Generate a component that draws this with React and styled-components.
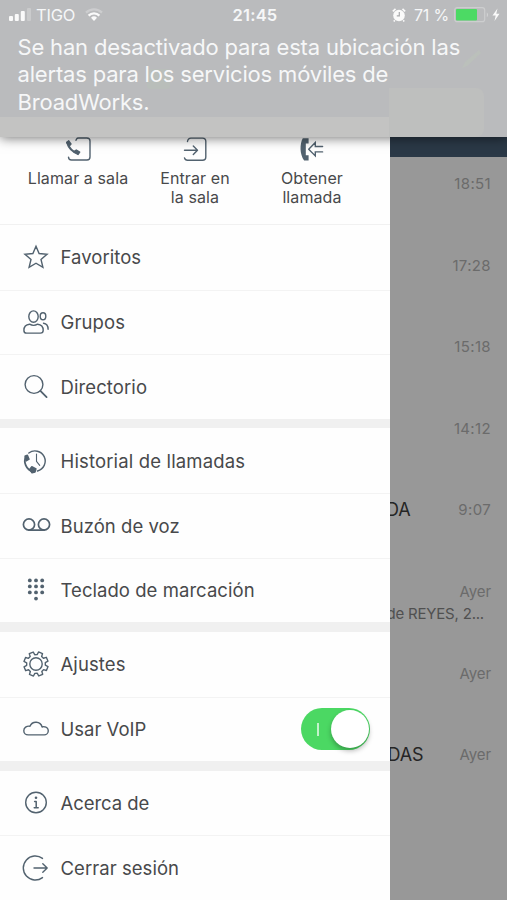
import React, { useState } from 'react'
import styled, { createGlobalStyle } from "styled-components";

const GlobalStyle=createGlobalStyle`
*{
    box-sizing: border-box;
}
body{
    margin: 0;
    font-family: Inter, "Liberation Sans", sans-serif;
}
`;

const Screen=styled.div`
width: 507px;
height: 900px;
overflow: hidden;
background-color: #989898;
`;

/* ---- notification banner ---- */

const Banner=styled.div`
position: relative;
z-index: 2;
height: 137px;
overflow: hidden;
background-color: #babbbd;
color: #f6f7f8;
`;

const BannerShadow=styled.div`
position: relative;
z-index: 2;
box-shadow: 0 1px 11px rgba(0,0,0,0.55);
`;

const Ghost=styled.div`
position: absolute;
left: ${p => p.$x}px;
top: ${p => p.$y}px;
width: ${p => p.$w}px;
height: ${p => p.$h}px;
border-radius: ${p => p.$r || "0"};
background-color: ${p => p.$color};
`;

const GhostPencil=styled.svg`
position: absolute;
left: 459px;
top: 47px;
`;

const StatusBar=styled.div`
position: relative;
display: grid;
grid-template-columns: 1fr auto 1fr;
align-items: center;
height: 30px;
padding: 0 6px 0 9px;
font-size: 16px;
`;

const StatusSide=styled.div`
display: flex;
align-items: center;
justify-content: ${p => p.$end ? "flex-end" : "flex-start"};
`;

const Carrier=styled.span`
margin: 0 10px 0 5px;
font-size: 16.5px;
letter-spacing: -0.2px;
`;

const Clock=styled.span`
font-weight: 600;
font-size: 16.5px;
letter-spacing: 0.2px;
`;

const Percent=styled.span`
margin: 0 5px 0 8px;
letter-spacing: -0.2px;
`;

const Message=styled.p`
position: relative;
margin: 4px 0 0;
padding-left: 17.5px;
font-size: 22px;
line-height: 27.4px;
letter-spacing: -0.18px;
white-space: nowrap;
`;

/* ---- page under the banner ---- */

const Page=styled.div`
display: flex;
height: 763px;
`;

const Drawer=styled.nav`
flex: none;
width: 389.5px;
height: 763px;
overflow: hidden;
background-color: #fefefe;
color: #48494b;
z-index: 1;
`;

const Actions=styled.div`
display: grid;
grid-template-columns: 117px 117px 117px;
height: 88px;
padding-left: 19.5px;
border-bottom: 1px solid #f1f1f1;
`;

const Action=styled.div`
display: flex;
flex-direction: column;
align-items: center;
font-size: 16px;
line-height: 19px;
text-align: center;
letter-spacing: 0.1px;
white-space: pre;

svg{
    display: block;
    margin-bottom: 7px;
}
`;

const Group=styled.div`
& + &::before{
    content: "";
    display: block;
    height: 9.7px;
    background-color: #f0f0f0;
}
`;

const Row=styled.div`
display: flex;
align-items: center;
height: 64.6px;
padding: 0 20px 0 20px;
font-size: 18.5px;

& + &{
    border-top: 1px solid #f3f3f3;
}
`;

const RowIcon=styled.span`
display: flex;
justify-content: center;
width: 32px;
margin-right: 8.500px;
`;

const RowLabel=styled.span`
flex: 1;
letter-spacing: ${p => p.$track || 0}px;
`;

const Switch=styled.button`
display: flex;
align-items: center;
justify-content: ${p => p.$on ? "space-between" : "flex-end"};
width: 69px;
height: 42px;
padding: 0 1px 0 16px;
border: none;
border-radius: 21px;
background-color: #4bd863;
cursor: pointer;
`;

const SwitchMark=styled.span`
width: 2px;
height: 13px;
background-color: #c3f3cb;
`;

const Knob=styled.span`
width: 38px;
height: 38px;
border-radius: 50%;
background-color: #ffffff;
box-shadow: 0 3px 5px rgba(0,0,0,0.28);
`;

const History=styled.div`
flex: 1;
min-width: 0;
height: 763px;
overflow: hidden;
background-color: #989898;
`;

const NavStrip=styled.div`
height: 20px;
background-color: #2a3846;
`;

const Call=styled.div`
height: 81.6px;
padding: 16px 16px 0 0;
`;

const CallTop=styled.div`
display: flex;
justify-content: space-between;
height: 22px;
line-height: 22px;
`;

const Name=styled.span`
display: flex;
justify-content: flex-end;
width: ${p => p.$w || 0}px;
overflow: hidden;
color: #252525;
font-size: 18px;
letter-spacing: -0.1px;
`;

const Time=styled.span`
color: #6b6b6b;
font-size: 15px;
letter-spacing: ${p => p.$day ? "-0.1px" : "0.35px"};
`;

const Detail=styled.div`
display: flex;
justify-content: flex-end;
width: 94.5px;
overflow: hidden;
color: #505050;
font-size: 15px;
line-height: 22px;
letter-spacing: -0.2px;
white-space: nowrap;
`;

const ink="#52626f";

const Icon=({w=26,h=26,stroke=1.4,children}) => (
    <svg width={w} height={h} viewBox={`0 0 ${w} ${h}`} fill="none" stroke={ink} strokeWidth={stroke} strokeLinecap="round" strokeLinejoin="round">
        {children}
    </svg>
)

// eight teeth, four corners each
const gear=() => {
    const pts=[];
    for(let i=0;i<8;i++){
        [[-15,9.4],[-10,12.3],[10,12.3],[15,9.4]].forEach(([d,r]) => {
            const a=(i*45+d+22)*Math.PI/180;
            pts.push(`${(13+r*Math.cos(a)).toFixed(2)},${(13+r*Math.sin(a)).toFixed(2)}`);
        });
    }
    return pts.join(" ");
}

const icons={
    star: <Icon><path d="M13 2.2l3.1 7.3 8 .7-6.1 5.3 1.9 7.9-6.9-4.2-6.9 4.2L8 15.5 1.9 10.2l8-.7z" strokeLinejoin="miter" /></Icon>,
    people: <Icon>
        <ellipse cx="10.5" cy="7.6" rx="4.7" ry="5.7" />
        <ellipse cx="20" cy="7.2" rx="2.8" ry="3.5" />
        <path d="M6.6 15.2c2.7 1.6 5.3 1.6 8 0 3.4.4 5.6 2.8 5.6 6 0 2.2-.8 2.9-2.8 2.9H3.6c-2 0-2.7-.7-2.7-2.9 0-3.2 2.2-5.6 5.7-6z" />
        <path d="M20.5 14.2c2.9.4 4.6 2.6 4.6 6" />
    </Icon>,
    search: <Icon><circle cx="11" cy="10.500" r="8.900" /><path d="M17.400 16.900l6.200 6.200" strokeWidth="1.800" /></Icon>,
    history: <Icon>
        <path d="M5.8 5A10.2 10.2 0 1 1 14.5 23" />
        <path d="M13.5 6v7.4l3.2 4" strokeWidth="1.1" />
        <path d="M3 8.5C0 13.5 3 22.2 10.3 23.8" strokeWidth="1.8" />
        <path d="M2 8.2l2.4-1 1.7 4-3 1.7zM6.6 21.4l2.2-2.7 4.2 2.1-1 3.3-3 .7z" fill={ink} />
    </Icon>,
    voicemail: <Icon w={29} h={26}>
        <circle cx="7" cy="11.5" r="5.600" strokeWidth="1.700" />
        <circle cx="22" cy="11.5" r="5.600" strokeWidth="1.700" />
        <path d="M7 17.200h15" strokeWidth="1.700" />
    </Icon>,
    keypad: <Icon w={26} h={28}>
        {[4.4,10.4,16.4].map(y => [6.8,13,19.2].map(x => <circle key={`${x}-${y}`} cx={x} cy={y} r="1.9" fill={ink} stroke="none" />))}
        <circle cx="13" cy="22.6" r="1.9" fill={ink} stroke="none" />
    </Icon>,
    gear: <Icon><polygon points={gear()} /><circle cx="13" cy="13" r="6.2" /></Icon>,
    cloud: <Icon><path d="M5.2 18.9h15.800a4.100 4.100 0 0 0 .3-8.200c-.9-.1-1.500 0-2.200.3A6.400 6.400 0 0 0 7 10.200c-3.400-.5-6.200 1.500-6.200 4.500 0 2.400 1.900 4.200 4.400 4.200z" /></Icon>,
    info: <Icon>
        <circle cx="13" cy="12.500" r="10.300" />
        <path d="M13.200 11.500v6M11.600 11.500h1.600M11.200 17.800h4" strokeWidth="1.500" />
        <circle cx="13" cy="7.800" r="1.300" fill={ink} stroke="none" />
    </Icon>,
    logout: <Icon w={28} h={28}>
        <path d="M20.500 4.400A12 12 0 1 0 20.500 23.600" />
        <path d="M12 14h13.200M20.800 9.800l4.400 4.200-4.400 4.200" />
    </Icon>,
    callRoom: <Icon w={28} h={25}>
        <path d="M12 3.300l.6-1.300c.4-.8 1-1 2-1h8.200c2 0 3.200 1 3.200 3v16c0 2-1 3-3 3H7.500c-2 0-3-.9-3-2.900" />
        <path d="M3.200 5.500c1.600 5.600 4.700 9 10.400 11" strokeWidth="2.200" />
        <path d="M2.700 5.500l2-1.700 2.300 3.200-2 2.200zM9.900 14.600l2.400-1.600 3.400 2.200-1.600 2.200z" fill={ink} />
    </Icon>,
    enterRoom: <Icon w={28} h={25}>
        <path d="M6.500 4.500c.4-2.500 1.400-3.400 3.500-3.400h11.500c2.200 0 3.300 1 3.300 3.200v15.700c0 2.200-1.100 3.200-3.300 3.200H6.500c-1.700 0-2.600-.6-3-2.300" />
        <path d="M3.500 13.200h12.800M12.300 9l4.200 4.200-4.200 4.200" />
    </Icon>,
    pickUp: <Icon w={28} h={25}>
        <path d="M4.800 1.200h5.800v5.200H7.800v11.800h2.800v5.200H6.100C1.600 17 1.600 7 4.800 1.200z" fill={ink} stroke="none" />
        <path d="M10.700 12.200l6.600-6.700v4h7.300M10.700 12.200l6.600 6.700v-4h7.300" strokeLinejoin="miter" />
    </Icon>,
}

const groups=[
    [
        {icon:"star",label:"Favoritos",track:0.05},
        {icon:"people",label:"Grupos",track:0.1},
        {icon:"search",label:"Directorio",track:0.1},
    ],
    [
        {icon:"history",label:"Historial de llamadas",track:0.15},
        {icon:"voicemail",label:"Buzón de voz",track:0.05},
        {icon:"keypad",label:"Teclado de marcación",track:0.05},
    ],
    [
        {icon:"gear",label:"Ajustes",track:0.1},
        {icon:"cloud",label:"Usar VoIP",track:0},
    ],
    [
        {icon:"info",label:"Acerca de",track:-0.05},
        {icon:"logout",label:"Cerrar sesión",track:0.05},
    ],
];
groups[2][1].toggle=true;

const calls=[
    {time:"18:51"},
    {time:"17:28"},
    {time:"15:18"},
    {time:"14:12"},
    {time:"9:07",name:"DA",w:21},
    {time:"Ayer",day:true,detail:"de REYES, 2..."},
    {time:"Ayer",day:true},
    {time:"Ayer",day:true,name:"DAS",w:34},
];

const App = () => {
    const[voip,setVoip]=useState(true);

  return (
    <Screen>
        <GlobalStyle/>
        <BannerShadow>
            <Banner>
                <Ghost $x={0} $y={117} $w={389} $h={20} $color="#c3c3c2"/>
                <Ghost $x={389} $y={88} $w={95} $h={49} $r="0 8px 8px 0" $color="#bebfbe"/>
                <Ghost $x={147} $y={69} $w={23} $h={20} $r="3px" $color="#b9beba"/>
                <GhostPencil width="24" height="24" viewBox="0 0 24 24">
                    <path d="M3 21l3-6L20 3l2 3L8 19z" fill="#bbc0bb"/>
                </GhostPencil>

                <StatusBar>
                    <StatusSide>
                        <svg width="22" height="14" viewBox="0 0 22 14" fill="#fafafa">
                            <rect x="0" y="8" width="4" height="5" rx="1"/>
                            <rect x="5.800" y="6" width="4" height="7" rx="1"/>
                            <rect x="11.800" y="3" width="4" height="10" rx="1"/>
                            <rect x="18" y="0" width="4" height="13" rx="1" opacity="0.25"/>
                        </svg>
                        <Carrier>TIGO</Carrier>
                        <svg width="18" height="14" viewBox="0 0 18 14" fill="none" stroke="#fafafa" strokeWidth="2.300">
                            <path d="M1 4.600a11.500 11.500 0 0 1 16 0" opacity="0.3"/>
                            <path d="M3.600 7.600a7.700 7.700 0 0 1 10.800 0"/>
                            <path d="M9 13l-3-3.200a4.300 4.300 0 0 1 6 0z" fill="#fafafa" stroke="none"/>
                        </svg>
                    </StatusSide>
                    <Clock>21:45</Clock>
                    <StatusSide $end>
                        <svg width="14" height="14" viewBox="0 0 14 14">
                            <circle cx="7" cy="7.500" r="5.800" fill="#fafafa"/>
                            <path d="M.8 3.300L3.500.9M13.200 3.300L10.500.9M2.800 12.200l-1 1.300M11.200 12.200l1 1.300" stroke="#fafafa" strokeWidth="1.600"/>
                            <path d="M7.300 4v3.800H4.800" fill="none" stroke="#a9aaac" strokeWidth="1.200"/>
                        </svg>
                        <Percent>71 %</Percent>
                        <svg width="47" height="16" viewBox="0 0 47 16">
                            <rect x=".7" y=".7" width="30" height="14" rx="2.500" fill="none" stroke="#cdcecf" strokeWidth="1.200"/>
                            <rect x="2" y="2" width="21" height="11.500" rx="1" fill="#4cda64"/>
                            <path d="M32.800 5.500c1.600.8 1.600 3.900 0 4.700z" fill="#d3d4d5"/>
                            <path d="M43.500 1.500L38.500 8.500h3.200l-1.200 5.500 5-7.200h-3.200z" fill="#fafafa"/>
                        </svg>
                    </StatusSide>
                </StatusBar>
                <Message>
                    Se han desactivado para esta ubicación las<br/>
                    alertas para los servicios móviles de<br/>
                    BroadWorks.
                </Message>
            </Banner>
        </BannerShadow>

        <Page>
            <Drawer>
                <Actions>
                    <Action>{icons.callRoom}Llamar a sala</Action>
                    <Action>{icons.enterRoom}{"Entrar en\nla sala"}</Action>
                    <Action>{icons.pickUp}{"Obtener\nllamada"}</Action>
                </Actions>
                {groups.map((rows,i) => (
                    <Group key={i}>
                        {rows.map(row => (
                            <Row key={row.label}>
                                <RowIcon>{icons[row.icon]}</RowIcon>
                                <RowLabel $track={row.track}>{row.label}</RowLabel>
                                {row.toggle && (
                                    <Switch $on={voip} onClick={() => setVoip(!voip)} aria-label={row.label}>
                                        <SwitchMark/>
                                        <Knob/>
                                    </Switch>
                                )}
                            </Row>
                        ))}
                    </Group>
                ))}
            </Drawer>

            <History>
                <NavStrip/>
                {calls.map((call,i) => (
                    <Call key={i}>
                        <CallTop>
                            <Name $w={call.w}>{call.name}</Name>
                            <Time $day={call.day}>{call.time}</Time>
                        </CallTop>
                        {call.detail && <Detail>{call.detail}</Detail>}
                    </Call>
                ))}
            </History>
        </Page>
    </Screen>
  )
}

export default App
